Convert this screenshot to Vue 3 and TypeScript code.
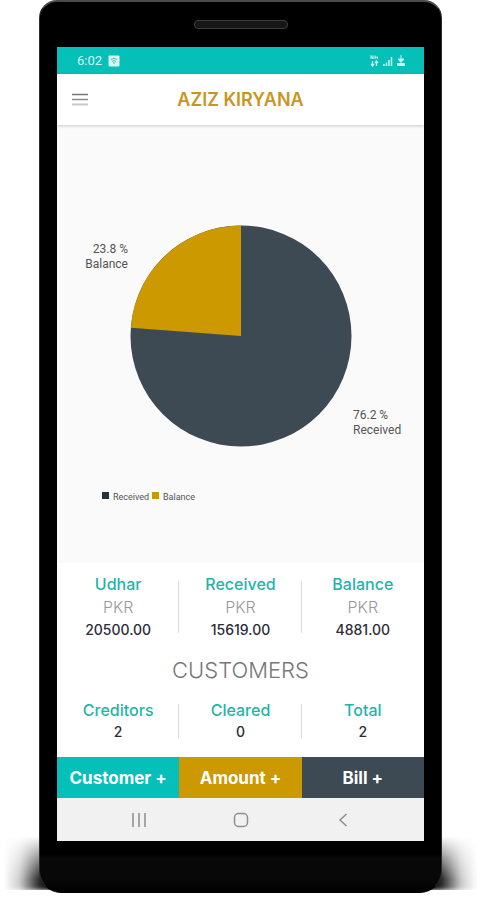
<script setup lang="ts">
interface Stat {
  label: string
  unit?: string
  value: string
}

interface Slice {
  label: string
  percent: number
  color: string
}

const balances: Stat[] = [
  { label: 'Udhar', unit: 'PKR', value: '20500.00' },
  { label: 'Received', unit: 'PKR', value: '15619.00' },
  { label: 'Balance', unit: 'PKR', value: '4881.00' },
]

const customers: Stat[] = [
  { label: 'Creditors', value: '2' },
  { label: 'Cleared', value: '0' },
  { label: 'Total', value: '2' },
]

const received: Slice = { label: 'Received', percent: 76.2, color: '#3e4a53' }
const balance: Slice = { label: 'Balance', percent: 23.8, color: '#cc9900' }

const cx = 184
const cy = 211
const radius = 110.5

// The balance slice runs counter-clockwise from twelve o'clock.
const angle = (balance.percent / 100) * Math.PI * 2
const edgeX = cx - radius * Math.sin(angle)
const edgeY = cy - radius * Math.cos(angle)
const balancePath = `M${cx} ${cy}V${cy - radius}A${radius} ${radius} 0 0 0 ${edgeX} ${edgeY}Z`
</script>

<template>
  <div class="stage">
    <div class="phone">
      <div class="speaker"></div>
      <div class="screen">
        <div class="status">
          <span class="clock">6:02</span>
          <svg class="picture-icon" width="12" height="12" viewBox="0 0 12 12">
            <rect x="0.5" y="0.5" width="11" height="11" rx="1" fill="#d5f5f0" />
            <path d="M3 4.5Q6 2 9 4.5M4 6.5Q6 4.8 8 6.5M6 7v2" fill="none" stroke="#4dbfb3" />
          </svg>
          <svg class="signal-icons" width="36" height="14" viewBox="0 0 36 14" fill="none" stroke="#c9f4ee">
            <path d="M1 5V1.500l2 3.500V1.500M5 1.500V5M5 3.300h2.500M7.500 2.500V5" />
            <path d="M2.500 7v4.500M1 10l1.500 2L4 10M6.500 12V7.500M5 9l1.500-2L8 9" stroke-width="1.300" />
            <path d="M14 12v-2M16.500 12V8.500M19 12V6M21.500 12V3" stroke-width="1.500" />
            <path d="M31 1v6M28 5l3 3.500L34 5z" fill="#c9f4ee" />
            <path d="M27.500 9.500h7v2h-7z" fill="#c9f4ee" />
          </svg>
        </div>

        <header class="bar">
          <button class="menu" type="button" aria-label="Menu">
            <svg width="16" height="13" viewBox="0 0 16 13">
              <path d="M0 1.500h16" stroke="#777" stroke-width="1.500" />
              <path d="M0 6.500h16" stroke="#8c8c8c" stroke-width="1.500" />
              <path d="M0 11.500h16" stroke="#c8c8c8" stroke-width="2" />
            </svg>
          </button>
          <h1>AZIZ KIRYANA</h1>
        </header>

        <svg class="chart" viewBox="0 0 367 438" role="img" aria-label="Received and balance">
          <circle :cx="cx" :cy="cy" :r="radius" :fill="received.color" />
          <path :d="balancePath" :fill="balance.color" />
          <g class="slice-label" text-anchor="end">
            <text x="71" y="128">{{ balance.percent }} %</text>
            <text x="71" y="143">{{ balance.label }}</text>
          </g>
          <g class="slice-label">
            <text x="296" y="294">{{ received.percent }} %</text>
            <text x="296" y="309">{{ received.label }}</text>
          </g>
          <g class="legend">
            <rect x="45" y="367" width="7" height="7" fill="#26323e" />
            <text x="56" y="375">{{ received.label }}</text>
            <rect x="95" y="367" width="7" height="7" :fill="balance.color" />
            <text x="106" y="375">{{ balance.label }}</text>
          </g>
        </svg>

        <section class="stats">
          <div v-for="s in balances" :key="s.label" class="stat">
            <span class="label">{{ s.label }}</span>
            <span class="unit">{{ s.unit }}</span>
            <span class="value">{{ s.value }}</span>
          </div>
        </section>

        <h2>CUSTOMERS</h2>

        <section class="stats counts">
          <div v-for="s in customers" :key="s.label" class="stat">
            <span class="label">{{ s.label }}</span>
            <span class="value">{{ s.value }}</span>
          </div>
        </section>

        <div class="actions">
          <button class="teal" type="button">Customer +</button>
          <button class="gold" type="button">Amount +</button>
          <button class="slate" type="button">Bill +</button>
        </div>

        <nav class="system">
          <button type="button" aria-label="Recent apps">
            <svg width="16" height="14" viewBox="0 0 16 14" stroke="#a6a6a6" stroke-width="2">
              <path d="M2 0v14M8 0v14M14 0v14" />
            </svg>
          </button>
          <button type="button" aria-label="Home">
            <svg width="16" height="16" viewBox="0 0 16 16" fill="none" stroke="#8f8f8f" stroke-width="1.500">
              <rect x="1.500" y="1.500" width="13" height="13" rx="4" />
            </svg>
          </button>
          <button type="button" aria-label="Back">
            <svg width="16" height="14" viewBox="0 0 16 14" fill="none" stroke="#8f8f8f" stroke-width="1.500">
              <path d="M11.500 1L5 7l6.500 6" />
            </svg>
          </button>
        </nav>
      </div>
    </div>
  </div>
</template>

<style>
body {
  background: #fff;
}
</style>

<style scoped>
.stage {
  padding: 0 38px 6px 39px;
  overflow: hidden;
  font-family: Inter, 'Liberation Sans', sans-serif;
}

.phone {
  position: relative;
  box-sizing: border-box;
  padding: 18px 17px 51px;
  border: 1px solid #2c2c2c;
  border-top: 2px solid #4a4a4a;
  border-bottom-color: #000;
  border-radius: 18px 18px 22px 22px;
  background: linear-gradient(to top, #000, #080808 12px 35px, #000 37px);
}

.phone::before,
.phone::after {
  content: '';
  position: absolute;
  z-index: -1;
  bottom: 2px;
  width: 70px;
  height: 54px;
  filter: blur(2px);
  mask-image: linear-gradient(to bottom, transparent, #000 80%);
}

.phone::before {
  left: -36px;
  background: linear-gradient(to right, transparent, rgba(0, 0, 0, 0.2) 16px, rgba(0, 0, 0, 0.8) 34px, #000 44px);
}

.phone::after {
  right: -36px;
  background: linear-gradient(to left, transparent, rgba(0, 0, 0, 0.2) 16px, rgba(0, 0, 0, 0.8) 34px, #000 44px);
}

.speaker {
  box-sizing: border-box;
  width: 94px;
  height: 9px;
  margin: 0 auto 18px;
  border: 1px solid #3c3c3c;
  border-radius: 4px;
  background: #161616;
}

.screen {
  background: #fff;
}

.status {
  display: flex;
  align-items: center;
  height: 27px;
  padding: 0 18px 0 20px;
  background: #05c0b8;
  color: #d5f7f2;
}

.clock {
  font-family: Roboto, sans-serif;
  font-size: 13px;
}

.picture-icon {
  margin-left: 6px;
}

.signal-icons {
  margin-left: auto;
}

.bar {
  position: relative;
  z-index: 1;
  display: grid;
  grid-template-columns: 46px 1fr 46px;
  align-items: center;
  height: 51px;
  box-shadow: 0 1px 3px rgba(0, 0, 0, 0.2);
}

button {
  margin: 0;
  padding: 0;
  border: 0;
  background: none;
  font: inherit;
  cursor: pointer;
}

.menu {
  display: flex;
  justify-content: center;
}

h1 {
  margin: 0;
  color: #c8961e;
  font-size: 18px;
  font-weight: 600;
  line-height: 24px;
  text-align: center;
}

.chart {
  display: block;
  width: 100%;
  background: #fafafa;
}

.slice-label {
  fill: #555;
  font-family: Roboto, sans-serif;
  font-size: 12px;
}

.legend {
  fill: #555;
  font-family: Roboto, sans-serif;
  font-size: 9px;
}

.stats {
  display: grid;
  grid-template-columns: repeat(3, 1fr);
  padding-top: 18px;
}

.stat {
  display: flex;
  flex-direction: column;
  align-items: center;
  justify-content: center;
  height: 52px;
}

.stat + .stat {
  box-shadow: -1px 0 #ddd;
}

.label {
  color: #1fb5a9;
  font-size: 16px;
  font-weight: 500;
  line-height: 22px;
}

.unit {
  color: #999;
  font-size: 16px;
  font-weight: 300;
  line-height: 24px;
}

.value {
  color: #2c2c38;
  font-size: 14px;
  font-weight: 500;
  line-height: 22px;
}

h2 {
  margin: 22px 0 0;
  color: #777;
  font-size: 22px;
  font-weight: 300;
  line-height: 30px;
  text-align: center;
}

.counts {
  padding: 19px 0;
}

.counts .stat {
  height: 34px;
}

.actions {
  display: grid;
  grid-template-columns: repeat(3, 1fr);
}

.actions button {
  height: 41px;
  color: #fff;
  font-size: 17px;
  font-weight: 700;
}

.teal {
  background: #05c0b8;
}

.gold {
  background: #cc9900;
}

.slate {
  background: #3e4a53;
}

.system {
  display: flex;
  justify-content: center;
  gap: 86px;
  height: 43px;
  background: #f1f1f1;
}

.system button {
  display: flex;
  align-items: center;
}
</style>
